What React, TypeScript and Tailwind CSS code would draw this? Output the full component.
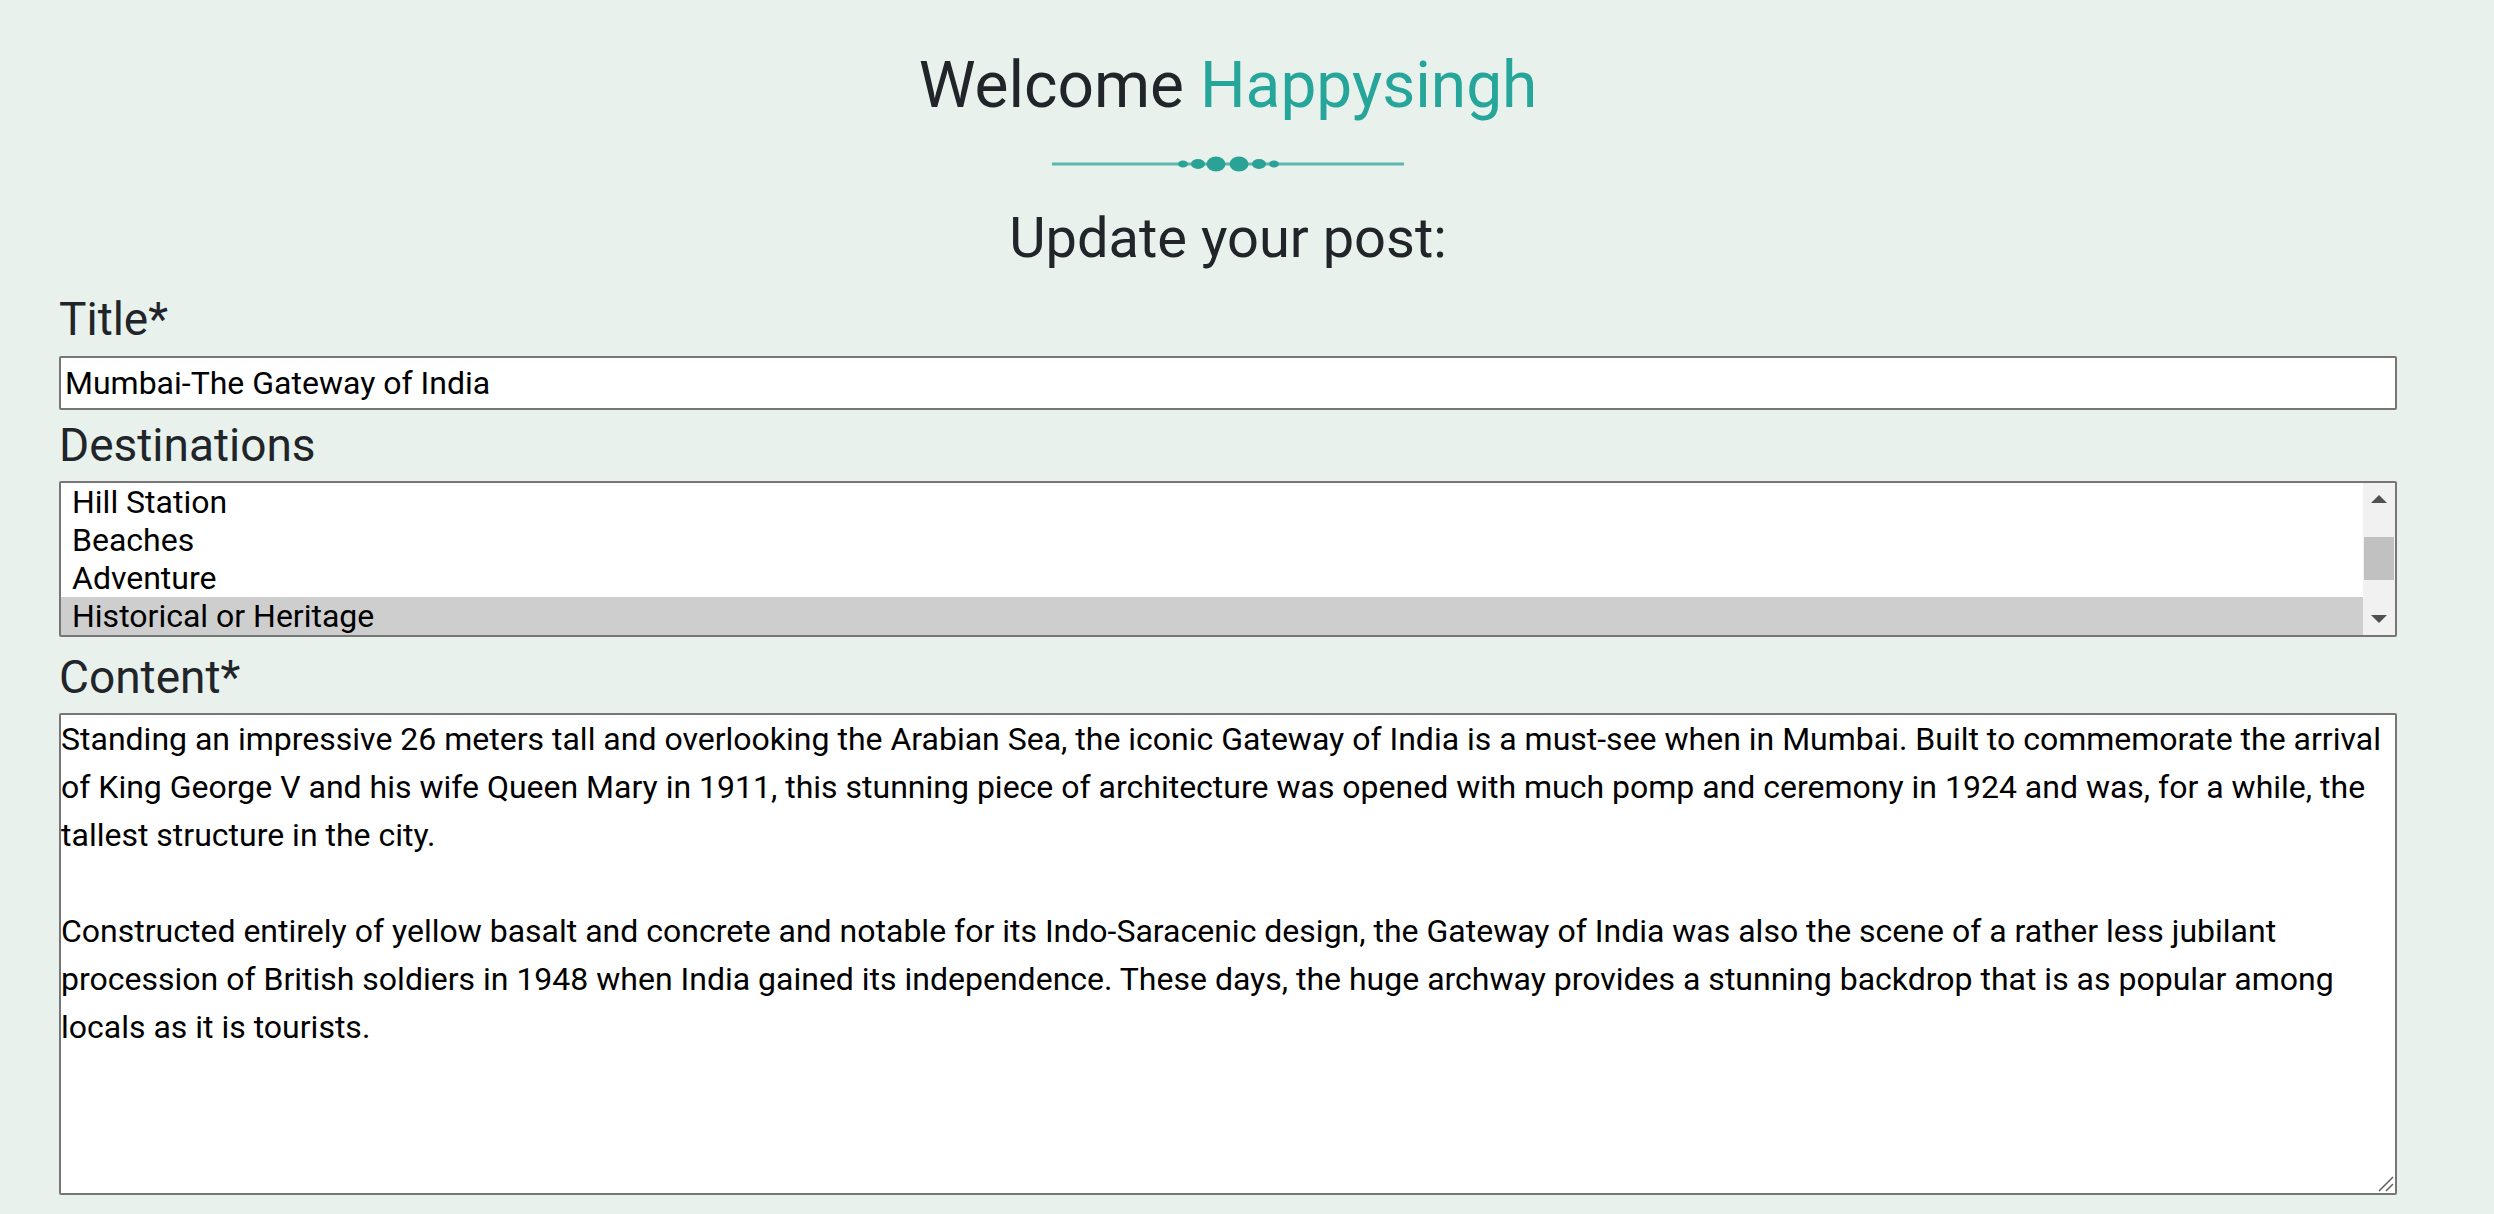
import { useState } from "react";

const content = `Standing an impressive 26 meters tall and overlooking the Arabian Sea, the iconic Gateway of India is a must-see when in Mumbai. Built to commemorate the arrival of King George V and his wife Queen Mary in 1911, this stunning piece of architecture was opened with much pomp and ceremony in 1924 and was, for a while, the tallest structure in the city.

Constructed entirely of yellow basalt and concrete and notable for its Indo-Saracenic design, the Gateway of India was also the scene of a rather less jubilant procession of British soldiers in 1948 when India gained its independence. These days, the huge archway provides a stunning backdrop that is as popular among locals as it is tourists.`;

const destinations = ["Hill Station", "Beaches", "Adventure", "Historical or Heritage"];

function Divider() {
  return (
    <svg width="352" height="16" viewBox="0 0 352 16" className="mx-auto block">
      <line x1="0" y1="8" x2="352" y2="8" stroke="#5cb8ae" strokeWidth="3" />
      <ellipse cx="131" cy="8" rx="5" ry="3.5" fill="#2aa396" />
      <ellipse cx="146" cy="8" rx="7" ry="5" fill="#2aa396" />
      <ellipse cx="164" cy="8" rx="9.5" ry="7.5" fill="#2aa396" />
      <ellipse cx="187" cy="8" rx="9.5" ry="7.5" fill="#2aa396" />
      <ellipse cx="207" cy="8" rx="7" ry="5" fill="#2aa396" />
      <ellipse cx="222" cy="8" rx="5" ry="3.5" fill="#2aa396" />
    </svg>
  );
}

function DestinationList({ selected }: { selected: string }) {
  return (
    <div className="mt-[8px] flex h-[156px] overflow-hidden rounded-[2px] border-2 border-[#767676] bg-white">
      <div className="flex-1">
        {destinations.map((d) => (
          <div
            key={d}
            className={`h-[38px] pl-[11px] text-[32px] leading-[38px] text-black ${d === selected ? "bg-[#cecece]" : ""}`}
          >
            {d}
          </div>
        ))}
      </div>
      <div className="flex w-[32px] flex-col bg-[#f1f1f1]">
        <div className="flex h-[32px] items-center justify-center">
          <div className="h-0 w-0 border-x-[8px] border-b-[8px] border-x-transparent border-b-[#505050]" />
        </div>
        <div className="flex-1 px-[1px]">
          <div className="mt-[22px] h-[43px] bg-[#c1c1c1]" />
        </div>
        <div className="flex h-[32px] items-center justify-center">
          <div className="h-0 w-0 border-x-[8px] border-t-[8px] border-x-transparent border-t-[#505050]" />
        </div>
      </div>
    </div>
  );
}

export default function App() {
  const [title, setTitle] = useState("Mumbai-The Gateway of India");
  const [text, setText] = useState(content);

  return (
    <div className="min-h-screen bg-[#e8f1ec] pb-[19px] font-['Roboto','Liberation_Sans',sans-serif] text-[#212529]">
      <div className="ml-[59px] flex w-[2338px] flex-col">
        <h1 className="mt-[47px] text-center text-[64px] leading-[78px]">
          Welcome <span className="text-[#26a69a]">Happysingh</span>
        </h1>
        <div className="mt-[31px]">
          <Divider />
        </div>
        <h2 className="mt-[32px] text-center text-[56px] leading-[68px]">Update your post:</h2>

        <label className="mt-[20px] text-[46px] leading-[55px]">Title*</label>
        <input
          className="mt-[9px] h-[54px] w-full rounded-[2px] border-2 border-[#767676] bg-white px-[4px] text-[32px] text-black outline-none"
          value={title}
          onChange={(e) => setTitle(e.target.value)}
        />

        <label className="mt-[8px] text-[46px] leading-[55px]">Destinations</label>
        <DestinationList selected="Historical or Heritage" />

        <label className="mt-[13px] text-[46px] leading-[55px]">Content*</label>
        <div className="relative mt-[8px]">
          <textarea
            className="block h-[482px] w-full resize-none rounded-[2px] border-2 border-[#767676] bg-white p-0 text-[32px] leading-[48px] text-black outline-none"
            value={text}
            onChange={(e) => setText(e.target.value)}
          />
          <svg width="18" height="18" viewBox="0 0 18 18" className="absolute bottom-[2px] right-[2px]">
            <line x1="2" y1="16" x2="16" y2="2" stroke="#646464" strokeWidth="1.6" />
            <line x1="9" y1="16" x2="16" y2="9" stroke="#646464" strokeWidth="1.6" />
          </svg>
        </div>
      </div>
    </div>
  );
}
